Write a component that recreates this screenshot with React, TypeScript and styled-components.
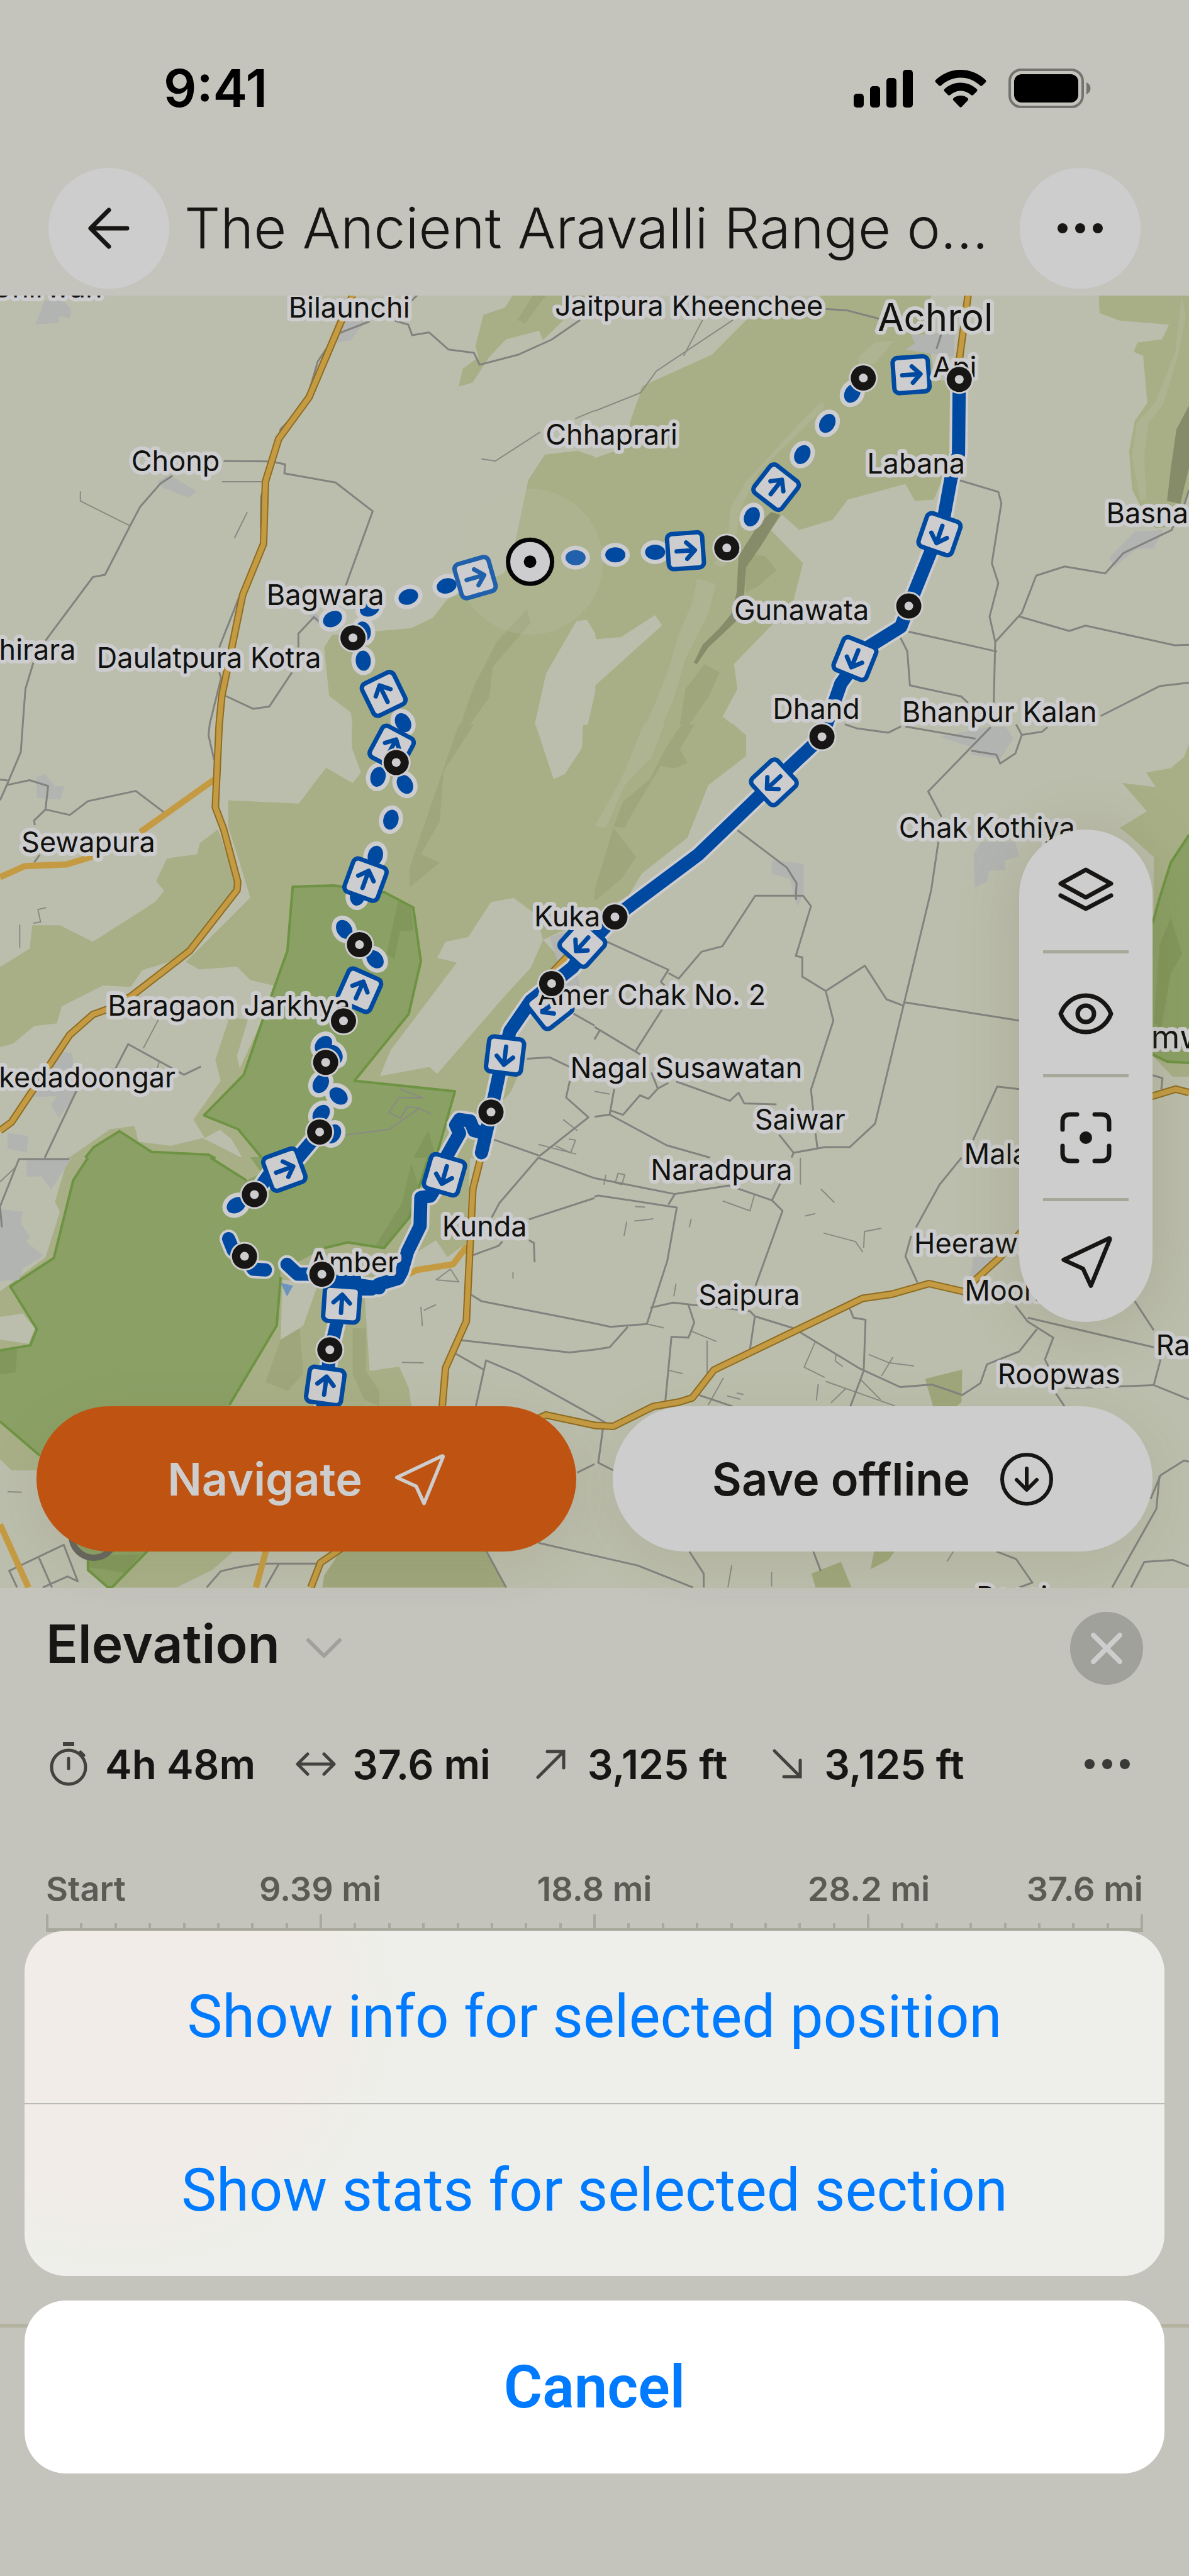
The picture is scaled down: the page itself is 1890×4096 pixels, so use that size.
import React from "react";
import styled, { createGlobalStyle } from "styled-components";

const Global = createGlobalStyle`
  *, *::before, *::after { box-sizing: border-box; }
  body { margin: 0; background: #c4c3bc; font-family: Inter, "Liberation Sans", sans-serif; color: #171614; }
  button { font: inherit; color: inherit; border: 0; padding: 0; background: none; cursor: pointer; }
  h1, h2, p, ul { margin: 0; padding: 0; }
  svg { display: block; flex: none; }
`;

/* ---------- map data ---------- */

/* The map is stored as six sheets; each sheet has its own origin and grid density. */
const K = 0.984375;
type Sheet = "A" | "B" | "C" | "D" | "E" | "F";
const SHEETS: Record<Sheet, [number, number, number]> = {
  A: [0, 470, 2.24],
  B: [960, 470, 2.24],
  C: [0, 1170, 2.24],
  D: [960, 1170, 2.24],
  E: [0, 1870, 2.1778],
  F: [960, 1870, 2.1778],
};

const at = (s: Sheet, x: number, y: number): [number, number] => {
  const [ox, oy, sy] = SHEETS[s];
  return [
    Math.round((ox + x / 1.6333) * K * 10) / 10,
    Math.round(((oy + y / sy) * K - 470) * 10) / 10,
  ];
};

const line = (s: Sheet, pts: string) =>
  pts
    .split(" ")
    .map((p) => {
      const [x, y] = p.split(",").map(Number);
      return at(s, x, y).join(",");
    })
    .join(" ");

type Shape = [Sheet, string];

const WOODS: Shape[] = [
  ["A", "1352,16 1570,16 1570,60 1490,100 1432,178 1422,144 1335,175 1290,240 1246,332 1210,346 1220,282 1262,240 1254,200 1275,86 1332,60"],
  ["A", "1570,600 1523,578 1437,592 1393,685 1360,900 1330,1020 1180,1115 1142,1182 1085,1220 875,1245 855,1290 868,1465 925,1525 930,1570 1570,1570"],
  ["B", "0,16 30,16 0,50"],
  ["B", "600,16 890,16 870,60 875,150 900,320 945,330 945,590 895,755 845,760 820,698 668,755 628,828 540,865 495,810 465,865 550,985 525,1120 470,1205 368,1350 377,1440 338,1540 365,1570 -2,1570 -2,605 93,560 93,478 125,345 310,230 400,105 560,50"],
  ["B", "1330,16 1568,16 1568,720 1530,850 1480,860 1437,770 1418,720 1410,580 1425,470 1458,405 1447,235 1422,220 1432,187 1497,175 1515,122 1385,107 1332,80"],
  ["C", "602,275 788,287 860,157 930,212 952,175 928,85 928,-2 1570,-2 1570,690 1432,780 1480,850 1340,1100 1380,1230 1345,1335 1300,1400 1270,1570 1130,1570 935,1290 720,945 660,925 625,877 525,887 490,860 660,627 632,500 602,370"],
  ["C", "575,380 527,430 520,470 440,485 412,567 433,603 410,642 245,787 158,727 85,727 78,812 0,878 0,1168 35,1155 90,1092 150,1082 163,1020 272,945 345,950 375,890 440,862 505,820 625,600 620,560"],
  ["C", "605,1060 690,1075 640,1270 538,1415 628,1465 690,1570 640,1570 610,1500 580,1467 540,1497 510,1430 582,1290 568,1215"],
  ["C", "180,1570 290,1465 355,1453 365,1510 450,1525 535,1497 640,1570"],
  ["D", "-2,-2 365,-2 400,40 400,115 300,220 245,410 125,540 90,620 -2,690"],
  ["D", "1568,70 1555,118 1520,158 1455,175 1480,227 1392,212 1457,315 1385,375 1410,400 1475,480 1472,1200 1525,1275 1568,1275"],
  ["E", "180,-2 145,155 158,190 120,350 0,470 0,1060 30,1100 600,1100 605,875 1085,875 1078,810 1053,735 975,750 960,450 1150,290 1180,350 1230,300 1240,-2"],
  ["E", "390,1380 620,1380 560,1450 465,1512 290,1512"],
];

const CLEARINGS: Shape[] = [
  ["A", "1520,1195 1548,1190 1570,1240 1570,1450 1550,1570 1410,1570 1440,1385"],
  ["B", "-2,1432 178,1210 160,1173 70,1252 5,1260 -2,1235"],
  ["B", "0,435 122,368 90,480 93,560 0,605"],
  ["C", "1412,-2 1538,-2 1535,85 1490,180 1460,198"],
  ["C", "1355,628 1295,643 1235,770 1175,787 1153,845 1205,862 1030,1180 1002,1273 1133,1240 1153,1265 1330,985 1400,880 1432,780 1415,690"],
  ["C", "655,1062 690,1075 632,1245 625,1200"],
  ["E", "0,560 60,548 92,600 75,655 0,640"],
  ["E", "745,430 840,440 800,590 740,655"],
];

const WOODS_DEEP: Shape[] = [
  ["D", "230,0 265,0 225,90 245,140 210,160 175,150 100,320 80,375 50,370 75,280 145,200 190,80"],
  ["D", "50,375 110,480 70,560 0,640 0,600"],
  ["B", "400,950 450,960 480,1010 430,1070 400,1090"],
  ["B", "290,1350 330,1380 300,1470 250,1568 225,1568 240,1440"],
  ["A", "1390,1150 1400,1200 1300,1360 1290,1470 1240,1568 1215,1568 1250,1430 1310,1270"],
  ["C", "1210,0 1250,0 1170,170 1160,350 1110,470 1160,500 1080,590 1080,520 1165,180"],
  ["A", "1405,16 1440,16 1385,118 1365,105"],
  ["E", "740,640 790,600 800,760 760,820 700,790"],
  ["E", "930,600 965,600 965,750 1000,820 1000,875 960,850 930,760"],
  ["E", "900,1380 1280,1380 1335,1512 850,1512 855,1470"],
  ["F", "872,778 970,745 968,860 955,875 893,875"],
  ["F", "738,1380 795,1380 775,1415 728,1448"],
  ["F", "572,1463 650,1422 678,1512 583,1512"],
];

const VALLEYS: Shape[] = [
  ["B", "600,400 540,480 400,690 360,780 350,900 315,990 340,1000 372,900 385,790 430,660 608,420"],
  ["B", "270,1040 320,1060 300,1170 240,1330 210,1470 180,1570 135,1570 160,1490 195,1370 220,1250 260,1120"],
  ["D", "130,-2 185,-2 150,120 80,220 30,375 0,370 70,200 100,100"],
  ["B", "790,180 740,185 695,240 700,280 740,260"],
  ["B", "1548,16 1532,220 1480,400 1430,480 1418,600 1440,760 1455,750 1450,600 1460,480 1500,410 1540,230 1560,90"],
];

const RIDGES: Shape[] = [
  ["B", "490,810 440,920 400,1000 395,1090 385,1180 300,1290 270,1350 262,1345 285,1280 330,1220 360,1170 375,1090 380,960 430,850 465,800"],
  ["B", "1568,415 1535,500 1520,640 1510,760 1545,770 1568,640"],
];

const PARKS: Shape[] = [
  ["C", "772,588 880,583 1015,608 1090,663 1110,857 1078,1048 935,1290 1200,1328 1150,1571 690,1571 628,1465 538,1415 643,1268 690,1080 758,820"],
  ["C", "225,1571 247,1530 315,1472 400,1547 550,1557 568,1571"],
  ["E", "232,-2 560,-2 650,80 690,55 660,-2 1130,-2 1080,210 1013,318 917,298 855,318 740,400 730,590 605,870 500,1100 105,1048 0,928 0,678 80,660 97,603 27,453 142,353 193,80"],
  ["E", "230,1380 390,1380 290,1512 232,1450"],
  ["D", "1568,400 1520,500 1490,630 1472,720 1472,1195 1510,1220 1568,1225"],
];

const PARK_SHADES: Shape[] = [
  ["C", "1050,640 1085,665 1090,745 1055,750 1040,850 1020,830"],
  ["C", "1130,1470 1150,1568 1090,1568"],
  ["D", "1520,700 1550,830 1520,900 1495,1100 1475,1080 1490,800"],
  ["E", "0,678 45,670 42,755 0,762"],
  ["E", "1085,20 1110,130 1080,210 1013,318 990,310 1060,160"],
  ["E", "232,1400 370,1395 330,1460 232,1440"],
];

const PARK_EDGES: Shape[] = [
  ["C", "690,1568 628,1465 538,1415 643,1268 690,1080 758,820 772,588 880,583 1015,608 1090,663 1110,857 1078,1048 935,1290 1200,1328 1150,1568"],
  ["C", "225,1568 247,1530 315,1472 400,1547 550,1557 568,1571"],
  ["E", "232,0 193,80 142,353 27,453 97,603 80,660 0,678"],
  ["E", "555,0 650,80"],
  ["E", "1130,0 1080,210 1013,318 917,298 855,318"],
  ["E", "740,420 730,590 605,870"],
  ["E", "0,928 105,1048"],
  ["E", "232,1380 232,1450 285,1512 295,1512 390,1382"],
  ["D", "1568,400 1520,500 1490,630 1472,720"],
  ["D", "1472,1195 1510,1220 1568,1225"],
];

const TOWNS: Shape[] = [
  ["A", "118,35 165,35 188,65 185,100 158,90 153,115 93,122"],
  ["A", "415,690 440,668 465,680 518,725 497,748 430,712"],
  ["A", "905,110 965,110 925,178 885,188"],
  ["A", "812,1175 830,1160 850,1190 840,1205"],
  ["B", "835,160 950,150 948,240 820,212 845,190"],
  ["B", "1425,870 1500,865 1475,930 1430,935 1370,1000 1358,965"],
  ["C", "97,190 118,180 145,225 170,222 160,272 97,267"],
  ["C", "140,1180 190,1190 195,1240 205,1330 155,1425 135,1380 150,1345 80,1350"],
  ["C", "20,1478 75,1490 70,1550 20,1535"],
  ["C", "1450,770 1500,750 1530,950 1500,1000 1480,900"],
  ["D", "910,45 1040,10 1085,10 1105,50 1070,125 990,110 1000,85"],
  ["D", "468,492 552,505 552,610 535,660 515,560 467,540"],
  ["D", "1000,470 1020,425 1110,425 1120,478 1080,492 1085,528 1040,530 1035,570 1003,590"],
  ["E", "70,10 190,0 160,60 135,112 110,65 70,68"],
  ["E", "0,180 60,190 55,230 80,280 68,295 115,345 60,390 50,430 0,435"],
  ["F", "1000,350 1080,350 1040,405 990,420"],
];

const LANES: Shape[] = [
  ["A", "590,615 715,617 752,627 750,660 885,693 983,797 912,1065"],
  ["A", "455,668 423,697 370,780 343,850 277,1027 245,1035 120,1265"],
  ["A", "88,1345 67,1440 60,1568"],
  ["A", "890,155 975,110"],
  ["A", "1042,108 1077,122 1087,160 1132,150 1183,212 1250,224 1265,267 1368,230 1455,176 1530,105"],
  ["A", "1085,36 1100,16"],
  ["A", "595,1465 668,1512 710,1504 770,1380"],
  ["A", "787,1290 787,1240 828,1180 845,1200"],
  ["A", "890,150 838,255 818,350"],
  ["A", "765,465 740,500 735,540"],
  ["A", "700,700 688,745 688,860"],
  ["A", "630,1110 578,1290"],
  ["A", "578,1380 583,1400 553,1568"],
  ["B", "610,65 665,70 755,102"],
  ["B", "915,155 902,210"],
  ["B", "963,685 1065,727 1073,768 1048,985 1065,1057 1042,1178 1057,1270 1053,1490"],
  ["B", "820,1230 1062,1305"],
  ["B", "805,1250 825,1303 832,1427 967,1467 985,1490"],
  ["B", "1057,1270 1127,1165 1165,1030 1240,997 1347,1022 1395,948 1522,865 1530,840"],
  ["B", "1120,1178 1252,1230 1295,1211 1530,1282 1568,1280"],
  ["B", "1335,1538 1490,1430 1568,1417"],
  ["B", "1568,720 1555,775"],
  ["C", "60,0 55,100 18,220 0,275"],
  ["C", "0,200 20,203"],
  ["C", "18,220 78,202 127,223 120,308 90,348 92,365"],
  ["C", "120,308 184,328 232,278 358,241 432,318"],
  ["C", "105,472 90,500"],
  ["C", "553,0 550,40 565,130"],
  ["C", "305,1245 338,1157 485,1268 530,1238"],
  ["C", "202,1325 118,1568"],
  ["C", "1510,1045 1568,1090"],
  ["C", "1390,1210 1450,1205 1503,1240"],
  ["C", "1503,1290 1493,1350 1552,1422 1425,1560"],
  ["C", "1303,1503 1425,1562"],
  ["D", "660,0 693,15 775,30 808,8"],
  ["D", "820,8 1005,52"],
  ["D", "1045,10 880,243 915,335"],
  ["D", "907,425 888,600 740,1445 673,1530 608,1530 525,1550 487,1485"],
  ["D", "993,95 1060,110 1070,142 1110,105 1127,38 1180,27 1195,10"],
  ["D", "1127,38 1112,0"],
  ["D", "377,383 507,518 533,575 531,635"],
  ["D", "30,785 195,888 175,932 185,945"],
  ["D", "195,900 222,920 282,823 337,803 424,620 550,620 571,658 531,838 548,843 548,913 610,965 713,873 770,995 815,1018"],
  ["D", "815,1005 1120,1072"],
  ["D", "610,965 630,1072 571,1322 577,1400"],
  ["D", "583,1480 588,1535"],
  ["D", "178,1032 107,1185"],
  ["D", "0,1095 125,1198"],
  ["D", "15,1105 0,1140"],
  ["D", "150,1260 167,1318 195,1297"],
  ["D", "167,1318 142,1355 120,1342 75,1413 42,1397 52,1320"],
  ["D", "215,1292 357,1362 380,1333 395,1372 480,1375"],
  ["D", "0,1420 40,1412 190,1523 305,1568"],
  ["D", "42,1397 40,1412"],
  ["D", "525,1550 520,1568"],
  ["D", "1120,1320 1062,1311 998,1505"],
  ["D", "1472,1270 1498,1280 1495,1320"],
  ["E", "183,5 50,5 0,172 5,245"],
  ["E", "1420,0 1317,160 1297,210"],
  ["E", "1420,0 1568,72"],
  ["E", "1395,217 1568,142"],
  ["E", "1325,295 1315,310 1247,343"],
  ["E", "1395,290 1408,300 1410,368"],
  ["E", "1240,480 1270,505 1568,583"],
  ["E", "1215,642 1502,685 1568,675"],
  ["E", "1200,688 1275,745"],
  ["E", "1255,875 1282,713 1365,760 1568,910"],
  ["E", "1522,1108 1568,1078"],
  ["E", "1420,1355 1568,1400"],
  ["E", "1283,1385 1335,1512"],
  ["E", "545,1512 582,1455 630,1440 688,1428 838,1428"],
  ["E", "735,1430 700,1512"],
  ["E", "22,1455 168,1362 205,1490 178,1473 113,1512"],
  ["E", "25,1455 45,1512"],
  ["E", "103,1408 137,1512"],
  ["F", "0,72 212,128 355,98 468,150 490,90"],
  ["F", "468,150 496,187 425,450"],
  ["F", "212,128 195,165"],
  ["F", "0,137 10,133 217,175 192,363 138,585 42,595 0,583"],
  ["F", "88,595 40,667 0,675"],
  ["F", "147,528 208,510 272,520"],
  ["F", "247,515 263,580 248,633 203,630 187,855"],
  ["F", "320,525 410,540 423,558 410,675"],
  ["F", "423,558 525,600 700,742 806,807 890,798 970,835 1018,793 1035,727 1120,682 1167,603"],
  ["F", "673,530 683,563 715,570 710,750 675,875"],
  ["F", "968,0 910,95 848,245"],
  ["F", "835,275 820,347 852,440"],
  ["F", "1143,563 1475,667"],
  ["F", "1110,520 1143,577 1210,633 1188,710 1225,810"],
  ["F", "1425,505 1475,607"],
  ["F", "1493,710 1475,800 1568,850"],
  ["F", "1475,800 1240,812"],
  ["F", "1217,830 1240,875"],
  ["F", "22,955 10,1073 50,1100"],
  ["F", "0,910 35,937"],
  ["F", "0,1400 115,1435 260,1512"],
  ["F", "250,1385 288,1463 288,1512"],
  ["F", "577,1385 597,1455"],
  ["F", "1060,1385 1112,1412 1155,1495 1120,1512"],
  ["F", "1568,1070 1555,1065 1493,1117 1467,1200"],
  ["F", "1490,1120 1482,1235 1365,1512"],
  ["F", "1415,1512 1450,1422 1525,1415 1568,1437"],
  ["F", "275,835 365,875"],
];

const TRACKS: Shape[] = [
  ["A", "585,690 695,690"],
  ["A", "212,725 212,760 343,850"],
  ["A", "652,800 618,895"],
  ["A", "1270,608 1307,615 1425,510"],
  ["A", "1517,462 1568,433"],
  ["B", "285,105 235,235"],
  ["B", "365,105 163,290 122,368 0,435"],
  ["C", "52,725 52,808"],
  ["C", "122,663 100,670 107,715 88,720"],
  ["C", "418,1068 378,1172"],
  ["C", "420,1220 415,1245"],
  ["C", "905,1487 1025,1466 1105,1390 1138,1410"],
  ["C", "1055,1320 1115,1352 1052,1350 1025,1405 1057,1425 1073,1385 1105,1387"],
  ["C", "1420,1520 1520,1555"],
  ["C", "1485,1430 1523,1470"],
  ["C", "1500,1500 1518,1505 1505,1550 1465,1525"],
  ["D", "0,1328 40,1338"],
  ["E", "40,35 0,85"],
  ["E", "1060,720 1117,722"],
  ["E", "1110,525 1114,592"],
  ["E", "1118,537 1150,517"],
  ["E", "1150,430 1188,392 1210,437 1150,430"],
  ["E", "1353,403 1353,425"],
  ["E", "20,1175 57,1177"],
  ["F", "340,775 300,870"],
  ["F", "604,265 688,295 708,333"],
  ["F", "710,318 712,260 757,248"],
  ["F", "597,110 633,158"],
  ["F", "338,152 410,187 422,130"],
  ["F", "723,692 778,722 843,733"],
  ["F", "787,702 757,768"],
  ["F", "583,645 553,737 607,773"],
  ["F", "610,787 792,873"],
  ["F", "663,812 623,863"],
  ["F", "590,797 585,855"],
  ["F", "297,643 297,770"],
  ["F", "192,747 233,760"],
  ["F", "105,223 155,215"],
  ["F", "85,225 78,275"],
  ["F", "107,172 133,174"],
  ["F", "255,215 250,245"],
  ["F", "555,205 582,197"],
  ["F", "703,782 755,852"],
  ["F", "543,0 543,95"],
  ["F", "215,443 209,488"],
  ["F", "138,585 184,599"],
  ["F", "255,610 322,647"],
  ["F", "362,1433 352,1512"],
  ["F", "467,1458 467,1508"],
  ["F", "947,1385 930,1420"],
  ["F", "637,690 635,715 655,735"],
  ["F", "350,838 385,850"],
  ["F", "375,828 393,833"],
  ["F", "30,60 25,95"],
  ["F", "62,55 80,60 72,95 55,88 62,55"],
];

const HIGHWAYS: Shape[] = [
  ["A", "930,16 900,110 815,385 735,535 700,690 695,915 640,1100 585,1465 578,1568"],
  ["C", "578,0 568,300 590,380 627,570 625,600 500,820 345,985 285,1030 245,1050 183,1125 130,1235 30,1440 0,1470"],
  ["B", "985,16 963,240 962,400"],
  ["C", "1510,820 1455,900"],
  ["E", "1275,-80 1268,0 1247,110 1230,575 1175,740 1165,900"],
  ["E", "1400,930 1440,905 1570,942"],
  ["F", "0,942 50,945 155,875 222,860 258,845 315,747 707,495 785,480 882,443 980,473"],
  ["F", "1000,435 1070,350 1125,262"],
  ["E", "900,1375 845,1425 820,1512"],
  ["D", "1460,1350 1533,1320 1568,1332"],
];

const MAIN_ROADS: Shape[] = [
  ["C", "565,200 370,390"],
  ["C", "245,478 175,507 65,513 0,553"],
  ["E", "1232,310 1195,375 1100,395 1060,420"],
  ["E", "0,1290 75,1512"],
  ["E", "702,1380 675,1512"],
];

const ROUTE: Shape[] = [
  ["B", "962,320 960,590 940,680 920,830 885,950 829,1140 808,1215 720,1290 650,1420 600,1615"],
  ["D", "600,45 472,210 275,470 54,697 0,775"],
  ["C", "1568,775 1510,880 1400,1000 1345,1110 1325,1210 1295,1403 1285,1460 1270,1550"],
  ["C", "1275,1478 1250,1470 1240,1435 1212,1430 1202,1450 1212,1480 1175,1570 1165,1600"],
  ["E", "1170,60 1135,135 1110,140 1108,240 1075,330 1060,400 1050,425 1000,445 980,462 930,462 905,432 849,410"],
  ["E", "1000,458 930,445 935,425"],
  ["E", "930,430 900,515 872,676 850,890"],
  ["E", "849,410 785,410 757,375"],
  ["E", "700,395 668,392 645,347 615,325 603,285"],
  ["C", "843,1475 785,1570 730,1620"],
  ["C", "1470,1040 1490,1035"],
  ["E", "715,50 675,125"],
];

/* sheet, x, y, heading, faded */
const DOTS: [Sheet, number, number, number, number?][] = [
  ["A", 1518, 965, 0, 1],
  ["A", 1178, 1067, -15],
  ["A", 1077, 1107, -20],
  ["A", 975, 1150, -20],
  ["A", 877, 1187, -30],
  ["A", 958, 1232, 80],
  ["A", 958, 1338, 85],
  ["A", 1063, 1562, 60],
  ["B", 55, 955, 0],
  ["B", 160, 945, 0],
  ["B", 415, 817, -65],
  ["B", 548, 592, -60],
  ["B", 614, 479, -60],
  ["B", 680, 370, -60],
  ["C", 997, 190, -75],
  ["C", 1068, 217, 60],
  ["C", 1031, 345, -75],
  ["C", 990, 475, -75],
  ["C", 943, 620, -80],
  ["C", 908, 742, 60],
  ["C", 989, 850, 50],
  ["C", 853, 1160, -50],
  ["C", 882, 1195, 60],
  ["C", 846, 1300, -60],
  ["C", 893, 1345, 40],
  ["C", 847, 1410, -50],
  ["C", 878, 1482, -60],
  ["E", 623, 167, -30],
];

const SIGNS: [Sheet, number, number, number, number?][] = [
  ["B", 835, 303, -4],
  ["B", 240, 940, -4],
  ["B", 479, 710, -52],
  ["B", 910, 880, 109],
  ["B", 687, 1330, 112],
  ["A", 1253, 1037, -16, 1],
  ["A", 1012, 1458, -116],
  ["C", 1033, 85, -62],
  ["C", 964, 562, -70],
  ["C", 948, 962, -66],
  ["C", 1536, 795, 132],
  ["C", 1450, 1020, 142],
  ["C", 1332, 1198, 97],
  ["D", 473, 210, 137],
  ["E", 750, 42, -20],
  ["E", 1172, 60, 106],
  ["E", 901, 515, -86],
  ["E", 858, 803, -82],
];

const STOPS: [Sheet, number, number][] = [
  ["A", 931, 1255],
  ["B", 709, 315],
  ["B", 962, 320],
  ["B", 349, 930],
  ["B", 829, 1140],
  ["C", 1045, 138],
  ["C", 948, 797],
  ["C", 906, 1073],
  ["C", 859, 1223],
  ["C", 843, 1475],
  ["C", 1455, 938],
  ["C", 1295, 1403],
  ["D", 600, 45],
  ["D", 54, 697],
  ["E", 671, 130],
  ["E", 645, 347],
  ["E", 849, 410],
  ["E", 870, 676],
];

type Anchor = "start" | "middle" | "end";
const PLACES: [string, Sheet, number, number, Anchor?, number?][] = [
  ["Chirwan", "A", 270, 24, "end"],
  ["Bilaunchi", "A", 921, 97],
  ["Chonp", "A", 463, 652],
  ["Bagwara", "A", 858, 1137],
  ["hirara", "A", 200, 1335, "end"],
  ["Daulatpura Kotra", "A", 551, 1363],
  ["Chhaprari", "B", 45, 555],
  ["Jaitpura Kheenchee", "B", 249, 90],
  ["Achrol", "B", 899, 145, "middle", 60],
  ["Api", "B", 950, 312],
  ["Labana", "B", 848, 660],
  ["Gunawata", "B", 546, 1190],
  ["Basna", "B", 1350, 840, "start"],
  ["Dhand", "B", 585, 1547],
  ["Bhanpur Kalan", "B", 1068, 1560],
  ["Sewapura", "C", 233, 462],
  ["Baragaon Jarkhya", "C", 604, 1053],
  ["kedadoongar", "C", 463, 1313, "end"],
  ["Kuka", "C", 1496, 732],
  ["Amer Chak No. 2", "D", 151, 1015],
  ["Nagal Susawatan", "D", 242, 1280],
  ["Saiwar", "D", 542, 1465],
  ["Chak Kothiya", "D", 1035, 410],
  ["mwa", "D", 1468, 1172, "start", 52],
  ["Mala", "F", 975, 22, "start"],
  ["Heerawa", "F", 843, 337, "start"],
  ["Naradpura", "F", 335, 78],
  ["Moon", "F", 976, 503, "start"],
  ["Saipura", "F", 408, 518],
  ["Roopwas", "F", 1225, 797],
  ["Ra", "F", 1481, 695, "start"],
  ["Bassi", "F", 1101, 1580],
  ["Kunda", "E", 1278, 277],
  ["Amber", "E", 933, 403],
];

const BLUE = "#0049a1";
const FADED = "#2160aa";
const HALO = "#cdcdcf";

const Polys = ({ items, fill }: { items: Shape[]; fill: string }) => (
  <g fill={fill}>
    {items.map(([s, p], i) => (
      <polygon key={i} points={line(s, p)} />
    ))}
  </g>
);

const Lines = ({ items, color, width }: { items: Shape[]; color: string; width: number }) => (
  <g fill="none" stroke={color} strokeWidth={width} strokeLinejoin="round">
    {items.map(([s, p], i) => (
      <polyline key={i} points={line(s, p)} />
    ))}
  </g>
);

const MapSvg = styled.svg`
  width: 100%;
  height: auto;
  background: #bcbead;
`;

const Place = styled.text<{ $size: number }>`
  font: 400 ${(p) => p.$size}px Inter, "Liberation Sans", sans-serif;
  fill: #12120f;
  stroke: ${HALO};
  stroke-width: 12px;
  stroke-linejoin: round;
  paint-order: stroke;
`;

const TrailMap = () => {
  const [px, py] = at("A", 1398, 980);
  const [cx, cy] = at("E", 247, 1330);
  return (
    <MapSvg viewBox="0 0 1890 2055" role="img" aria-label="Route map">
      <Polys items={WOODS} fill="#a8af86" />
      <Polys items={CLEARINGS} fill="#bcbead" />
      <Polys items={WOODS_DEEP} fill="#9fa67b" />
      <Polys items={VALLEYS} fill="#aeb491" />
      <Polys items={RIDGES} fill="#868c6a" />
      <Polys items={PARKS} fill="#8ba065" />
      <Polys items={PARK_SHADES} fill="#82975b" />
      <Lines items={PARK_EDGES} color="#6e9343" width={4} />
      <Polys items={TOWNS} fill="#b2b4b2" />
      <Polys items={[["E", "740,440 773,450 757,488"]]} fill="#6d94bd" />
      <Lines items={TRACKS} color="#8a8a84" width={2} />
      <Lines items={LANES} color="#82827f" width={3} />
      <Lines items={MAIN_ROADS} color="#c49b42" width={10} />
      <Lines items={HIGHWAYS} color="#8d6c22" width={12} />
      <Lines items={HIGHWAYS} color="#c49b42" width={8} />
      <circle cx={cx} cy={cy} r={35} fill="#8ba065" stroke="#65655f" strokeWidth={10} />
      <circle cx={px} cy={py} r={116} fill="#bcbead" fillOpacity={0.25} />

      <g strokeLinecap="round">
        <Lines items={ROUTE} color={HALO} width={29} />
        {DOTS.map(([s, x, y, r], i) => {
          const [a, b] = at(s, x, y);
          return <ellipse key={i} cx={a} cy={b} rx={23} ry={19} fill={HALO} transform={`rotate(${r} ${a} ${b})`} />;
        })}
        <Lines items={ROUTE} color={BLUE} width={21} />
        {DOTS.map(([s, x, y, r, f], i) => {
          const [a, b] = at(s, x, y);
          return (
            <ellipse key={i} cx={a} cy={b} rx={16} ry={12} fill={f ? FADED : BLUE} transform={`rotate(${r} ${a} ${b})`} />
          );
        })}
      </g>

      {SIGNS.map(([s, x, y, r, f], i) => {
        const [a, b] = at(s, x, y);
        return (
          <g key={i} transform={`translate(${a} ${b}) rotate(${r})`} stroke={f ? FADED : BLUE} strokeWidth={7} strokeLinejoin="round" strokeLinecap="round">
            <rect x={-28} y={-28} width={56} height={56} rx={8} fill={HALO} />
            <path d="M-14 0H14M2 -13L15 0L2 13" fill="none" />
          </g>
        );
      })}

      {PLACES.map(([name, s, x, y, anchor = "middle", size = 45]) => {
        const [a, b] = at(s, x, y);
        return (
          <Place key={name} x={a} y={b} textAnchor={anchor} $size={size}>
            {name}
          </Place>
        );
      })}

      {STOPS.map(([s, x, y], i) => {
        const [a, b] = at(s, x, y);
        return (
          <g key={i}>
            <circle cx={a} cy={b} r={23} fill={HALO} />
            <circle cx={a} cy={b} r={20} fill="#171614" />
            <circle cx={a} cy={b} r={7} fill={HALO} />
          </g>
        );
      })}
      <circle cx={px} cy={py} r={35} fill={HALO} stroke="#050505" strokeWidth={7} />
      <circle cx={px} cy={py} r={10} fill="#050505" />
    </MapSvg>
  );
};

/* ---------- icons ---------- */

const NavArrow = ({ sw }: { sw: number }) => (
  <svg width="84" height="84" viewBox="0 0 24 24" fill="none" stroke="currentColor" strokeWidth={sw} strokeLinecap="round" strokeLinejoin="round" aria-hidden="true">
    <path d="M22.400 1.500L1.900 11.200L10.700 15.200L14.300 23L22.900 2Q23 1.200 22.400 1.500Z" />
  </svg>
);

const Dots = () => (
  <svg width="74" height="20" viewBox="0 0 74 20" fill="currentColor" aria-hidden="true">
    <circle cx={9} cy={10} r={8} />
    <circle cx={37} cy={10} r={8} />
    <circle cx={65} cy={10} r={8} />
  </svg>
);

/* ---------- layout ---------- */

const Page = styled.main`
  position: relative;
  min-height: 100vh;
  display: flex;
  flex-direction: column;
  overflow: hidden;
`;

const StatusBar = styled.div`
  display: flex;
  justify-content: space-between;
  align-items: center;
  height: 267px;
  padding: 0 156px 0 260px;
  color: #000;
`;
const Time = styled.time`
  font-size: 82px;
  font-weight: 600;
  line-height: 96px;
  padding-top: 14px;
`;
const StatusIcons = styled.div`
  display: flex;
  align-items: center;
  gap: 35px;
  padding-top: 14px;
`;

const TopBar = styled.header`
  display: flex;
  align-items: center;
  justify-content: space-between;
  gap: 24px;
  padding: 0 77px 11px;
`;
const RoundButton = styled.button`
  width: 192px;
  height: 192px;
  flex: none;
  display: grid;
  place-items: center;
  border-radius: 50%;
  background: #cdcdcd;
`;
const Title = styled.h1`
  flex: 1;
  min-width: 0;
  font-size: 90px;
  font-weight: 300;
  line-height: 120px;
  white-space: nowrap;
`;

const MapArea = styled.section`
  position: relative;
  z-index: 1;
`;
const Tools = styled.div`
  position: absolute;
  right: 58px;
  bottom: 423px;
  width: 212px;
  padding: 0 38px;
  border-radius: 106px;
  background: #cdcdcd;
  box-shadow: 0 8px 90px 10px rgba(110, 110, 70, 0.2);
`;
const Tool = styled.button`
  width: 100%;
  height: 192px;
  display: grid;
  place-items: center;
  & + & {
    height: 197px;
    border-top: 5px solid #a7a89a;
  }
`;
const Actions = styled.div`
  position: absolute;
  left: 58px;
  right: 58px;
  bottom: 58px;
  display: grid;
  grid-template-columns: 1fr 1fr;
  gap: 58px;
`;
const Action = styled.button<{ $primary?: boolean }>`
  height: 231px;
  display: flex;
  align-items: center;
  justify-content: center;
  gap: 48px;
  border-radius: 116px;
  font-size: 72px;
  font-weight: 600;
  background: ${(p) => (p.$primary ? "#bf5311" : "#cdcdcd")};
  color: ${(p) => (p.$primary ? "#cdcdcd" : "#171614")};
  box-shadow: 0 20px 80px rgba(110, 110, 70, 0.14);
`;

const Panel = styled.section`
  height: 1170px;
  padding: 38px 73px 0;
`;
const PanelHead = styled.div`
  display: flex;
  align-items: center;
  justify-content: space-between;
`;
const PanelTitle = styled.button`
  display: flex;
  align-items: center;
  gap: 42px;
  color: #a0a19a;
`;
const Heading = styled.h2`
  font-size: 84px;
  font-weight: 600;
  line-height: 100px;
  padding-bottom: 14px;
  color: #171614;
`;
const Close = styled.button`
  width: 116px;
  height: 116px;
  display: grid;
  place-items: center;
  border-radius: 50%;
  background: #a0a19a;
  color: #cdcdcd;
`;
const Stats = styled.ul`
  display: flex;
  align-items: center;
  gap: 60px;
  height: 100px;
  margin-top: 76px;
  list-style: none;
`;
const Stat = styled.li`
  display: flex;
  align-items: center;
  gap: 22px;
  font-size: 64px;
  font-weight: 600;
  white-space: nowrap;
`;
const StatIcon = styled.span`
  width: 72px;
  display: grid;
  place-items: center;
  color: #42423e;
`;
const More = styled.button`
  padding: 20px;
  color: #3a3a38;
`;
const MoreItem = styled.li`
  margin-left: auto;
`;
const AxisLabels = styled.div`
  display: grid;
  grid-template-columns: 1fr 2fr 2fr 2fr 1fr;
  margin-top: 114px;
  font-size: 54px;
  font-weight: 600;
  line-height: 70px;
  text-align: center;
  white-space: nowrap;
  color: #5b5a53;
  > :first-child { text-align: left; }
  > :last-child { display: flex; justify-content: flex-end; }
`;
const Ruler = styled.div`
  display: flex;
  align-items: flex-end;
  justify-content: space-between;
  height: 28px;
  margin-top: 5px;
  border-bottom: 6px solid #a8a89d;
`;
const Tick = styled.i<{ $major: boolean }>`
  width: 4px;
  height: ${(p) => (p.$major ? 22 : 8)}px;
  background: #a8a89d;
`;
const TabBar = styled.footer`
  flex: 1;
  min-height: 400px;
  border-top: 6px solid #b4b3a0;
`;

const ActionSheet = styled.div`
  position: absolute;
  left: 39px;
  right: 39px;
  bottom: 163px;
  z-index: 2;
  display: flex;
  flex-direction: column;
  gap: 39px;
  font-family: Roboto, Inter, sans-serif;
  font-size: 94px;
  color: #007aff;
`;
const SheetGroup = styled.div`
  border-radius: 66px;
  overflow: hidden;
  background:
    radial-gradient(ellipse 440px 420px at 150px 120px, #f1ece7 0 70%, rgba(241, 236, 231, 0) 100%),
    #eeefea;
`;
const SheetButton = styled.button`
  display: block;
  width: 100%;
  height: 274px;
  & + & {
    height: 275px;
    border-top: 2px solid #b9bab5;
  }
`;
const Cancel = styled.button`
  height: 275px;
  border-radius: 66px;
  background: #fff;
  font-weight: 600;
`;

const AXIS = ["Start", "9.39 mi", "18.8 mi", "28.2 mi", "37.6 mi"];

export default function App() {
  return (
    <Page>
      <Global />
      <StatusBar>
        <Time>9:41</Time>
        <StatusIcons>
          <svg width="94" height="60" viewBox="0 0 94 60" aria-hidden="true">
            <rect x="0" y="38" width="16" height="22" rx="5" />
            <rect x="26" y="26" width="16" height="34" rx="5" />
            <rect x="52" y="13" width="16" height="47" rx="5" />
            <rect x="78" y="0" width="16" height="60" rx="5" />
          </svg>
          <svg width="82" height="60" viewBox="0 0 82 60" aria-hidden="true">
            <path d="M41 0C56 0 70 6 80.500 16Q82.500 18 80.500 20L75.500 25Q73.500 26.500 72 25C63.500 17 52.500 12.500 41 12.500C29.500 12.500 18.500 17 10 25Q8.500 26.500 6.500 25L1.500 20Q-0.500 18 1.500 16C12 6 26 0 41 0Z" />
            <path d="M41 20.500C50.500 20.500 59.500 24 66.500 30.500Q68.500 32.500 66.500 34.500L61 40Q59.500 41.500 57.500 40C53 36 47.200 33.500 41 33.500C34.800 33.500 29 36 24.500 40Q22.500 41.500 21 40L15.500 34.500Q13.500 32.500 15.500 30.500C22.500 24 31.500 20.500 41 20.500Z" />
            <path d="M41 41C45.500 41 49.500 42.500 52.500 45.200Q54 47 52.300 48.800L42.800 58.800Q41 60.500 39.200 58.800L29.700 48.800Q28 47 29.500 45.200C32.500 42.500 36.500 41 41 41Z" />
          </svg>
          <svg width="131" height="63" viewBox="0 0 131 63" aria-hidden="true">
            <rect x="2" y="2" width="116" height="59" rx="18" fill="none" stroke="#74736e" strokeWidth="4" />
            <rect x="9" y="9" width="102" height="45" rx="12" />
            <path d="M124 22C128 24 130.500 27 130.500 31.500C130.500 36 128 39 124 41Z" fill="#74736e" />
          </svg>
        </StatusIcons>
      </StatusBar>

      <TopBar>
        <RoundButton aria-label="Back">
          <svg width="66" height="66" viewBox="0 0 66 66" fill="none" stroke="#171614" strokeWidth="7" strokeLinecap="round" strokeLinejoin="round">
            <path d="M62 33H4M33 4L4 33L33 62" />
          </svg>
        </RoundButton>
        <Title>The Ancient Aravalli Range o...</Title>
        <RoundButton aria-label="More options">
          <Dots />
        </RoundButton>
      </TopBar>

      <MapArea>
        <TrailMap />
        <Tools>
          <Tool aria-label="Map layers">
            <svg width="88" height="76" viewBox="0 0 88 76" fill="none" stroke="currentColor" strokeWidth="7" strokeLinecap="round" strokeLinejoin="round">
              <path d="M44 6L84 28L44 50L4 28Z" />
              <path d="M4 47L44 68L84 47" />
            </svg>
          </Tool>
          <Tool aria-label="Visibility">
            <svg width="88" height="66" viewBox="0 0 88 66" fill="none" stroke="currentColor" strokeWidth="7">
              <path d="M4 33C10 17 25 4 44 4S78 17 84 33C78 49 63 62 44 62S10 49 4 33Z" strokeLinejoin="round" />
              <circle cx="44" cy="33" r="13" />
            </svg>
          </Tool>
          <Tool aria-label="Fit route">
            <svg width="82" height="82" viewBox="0 0 82 82" fill="none" stroke="currentColor" strokeWidth="7" strokeLinecap="round">
              <path d="M4 28V16Q4 4 16 4H27M55 4H66Q78 4 78 16V28M78 54V66Q78 78 66 78H55M27 78H16Q4 78 4 66V54" />
              <circle cx="41" cy="41" r="10" fill="currentColor" stroke="none" />
            </svg>
          </Tool>
          <Tool aria-label="My location">
            <NavArrow sw={1.9} />
          </Tool>
        </Tools>
        <Actions>
          <Action $primary>
            Navigate
            <NavArrow sw={1.6} />
          </Action>
          <Action>
            Save offline
            <svg width="84" height="84" viewBox="0 0 84 84" fill="none" stroke="currentColor" strokeWidth="6" strokeLinecap="round" strokeLinejoin="round" aria-hidden="true">
              <circle cx="42" cy="42" r="39" />
              <path d="M42 25V58M26 43L42 59L58 43" />
            </svg>
          </Action>
        </Actions>
      </MapArea>

      <Panel>
        <PanelHead>
          <PanelTitle>
            <Heading>Elevation</Heading>
            <svg width="56" height="32" viewBox="0 0 56 32" fill="none" stroke="currentColor" strokeWidth="6" strokeLinecap="round" strokeLinejoin="round" aria-hidden="true">
              <path d="M3 3L28 28L53 3" />
            </svg>
          </PanelTitle>
          <Close aria-label="Close">
            <svg width="50" height="50" viewBox="0 0 50 50" stroke="currentColor" strokeWidth="8" strokeLinecap="round">
              <path d="M4 4L46 46M46 4L4 46" />
            </svg>
          </Close>
        </PanelHead>

        <Stats>
          <Stat>
            <StatIcon>
              <svg width="60" height="70" viewBox="0 0 60 70" fill="none" stroke="currentColor" strokeWidth="5" strokeLinecap="round">
                <circle cx="30" cy="40" r="27" />
                <path d="M30 26V42M49 16L54 21" />
                <path d="M21 3H39" strokeWidth="6" strokeLinecap="butt" />
              </svg>
            </StatIcon>
            4h 48m
          </Stat>
          <Stat>
            <StatIcon>
              <svg width="64" height="40" viewBox="0 0 64 40" fill="none" stroke="currentColor" strokeWidth="5" strokeLinecap="round" strokeLinejoin="round">
                <path d="M4 20H60M19 4L3 20L19 36M45 4L61 20L45 36" />
              </svg>
            </StatIcon>
            37.6 mi
          </Stat>
          <Stat>
            <StatIcon>
              <svg width="48" height="48" viewBox="0 0 48 48" fill="none" stroke="currentColor" strokeWidth="5" strokeLinecap="round">
                <path d="M3 45L44 4M18 4H44V30" />
              </svg>
            </StatIcon>
            3,125 ft
          </Stat>
          <Stat>
            <StatIcon>
              <svg width="48" height="48" viewBox="0 0 48 48" fill="none" stroke="currentColor" strokeWidth="5" strokeLinecap="round">
                <path d="M3 3L44 44M18 44H44V18" />
              </svg>
            </StatIcon>
            3,125 ft
          </Stat>
          <MoreItem>
            <More aria-label="More stats">
              <Dots />
            </More>
          </MoreItem>
        </Stats>

        <AxisLabels>
          {AXIS.map((label) => (
            <span key={label}>{label}</span>
          ))}
        </AxisLabels>
        <Ruler>
          {Array.from({ length: 33 }, (_, i) => (
            <Tick key={i} $major={i % 8 === 0} />
          ))}
        </Ruler>
      </Panel>
      <TabBar />

      <ActionSheet role="dialog" aria-label="Elevation options">
        <SheetGroup>
          <SheetButton>Show info for selected position</SheetButton>
          <SheetButton>Show stats for selected section</SheetButton>
        </SheetGroup>
        <Cancel>Cancel</Cancel>
      </ActionSheet>
    </Page>
  );
}
